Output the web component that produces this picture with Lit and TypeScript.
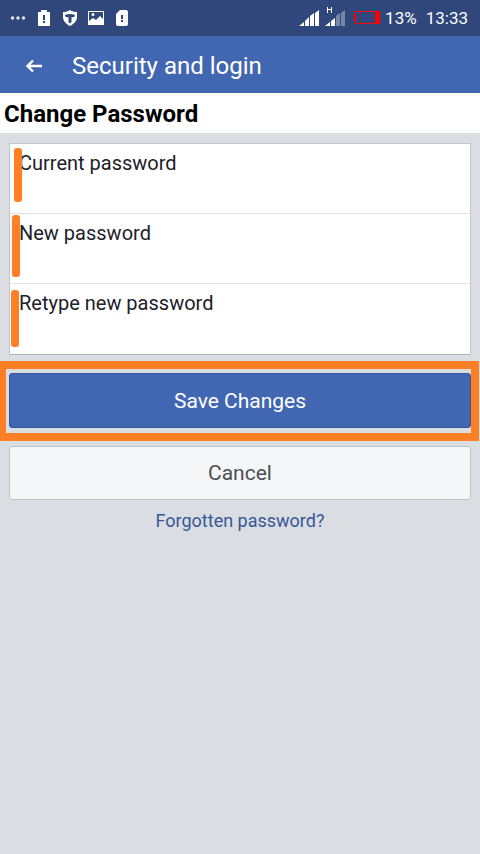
import { LitElement, html, css } from "lit";
import { customElement } from "lit/decorators.js";

@customElement("status-bar")
class StatusBar extends LitElement {
  static styles = css`
    :host {
      display: flex;
      align-items: center;
      justify-content: space-between;
      height: 36px;
      padding: 0 12px 0 10px;
      background: #2f477a;
      color: #fff;
      font-size: 17px;
      line-height: 20px;
    }
    .group { display: flex; align-items: center; }
    .notices { gap: 10px; }
    .signal { margin-right: 4px; }
    .battery { margin: 0 5px 0 4px; }
    .time { margin-left: 9px; }
    svg { display: block; }
  `;

  render() {
    return html`
      <div class="group notices">
        <svg width="16" height="20" fill="#e3e8f0" aria-hidden="true">
          <circle cx="2.5" cy="10" r="1.7" /><circle cx="8" cy="10" r="1.7" /><circle cx="13.5" cy="10" r="1.7" />
        </svg>
        <svg width="16" height="20" aria-hidden="true">
          <path fill="#fff" d="M5 2h6v2h3v14H2V4h3z" />
          <path fill="#2f477a" d="M7 7h2v5H7zM7 13h2v2H7z" />
        </svg>
        <svg width="16" height="20" aria-hidden="true">
          <path fill="#fff" d="M8 2c2 1.500 4.500 2 7 2v5c0 4-3 7-7 9c-4-2-7-5-7-9V4c2.500 0 5-.500 7-2z" />
          <path fill="#2f477a" d="M3 7c3-1.300 7-1.300 10 0c0 2-1.500 2.500-3.500 2v5L8 15.500L6.500 14V9C4.500 9.500 3 9 3 7z" />
        </svg>
        <svg width="16" height="20" aria-hidden="true">
          <path fill="#fff" fill-rule="evenodd" d="M0 3h16v14H0zM1 4v9l4-3 3 2 4-4 3 3V4z" />
          <circle cx="5" cy="6.500" r="1.500" fill="#fff" />
        </svg>
        <svg width="16" height="20" aria-hidden="true">
          <path fill="#fff" d="M6 2h6q2 0 2 2v12q0 2-2 2H4q-2 0-2-2V6z" />
          <path fill="#2f477a" d="M7 7h2v4H7zM7 12h2v2H7z" />
        </svg>
      </div>
      <div class="group">
        <svg class="signal" width="22" height="36" fill="#fff" aria-hidden="true">
          <path d="M1 26l5-4v4zM7 21l4-4v9H7zM12 16l4-3v13h-4zM17 13l4-3v16h-4z" />
        </svg>
        <svg class="signal" width="22" height="36" fill="#fff" role="img" aria-label="H network">
          <path d="M1 26l5-4v4zM7 21l4-3v8H7z" />
          <path opacity=".35" d="M12 16l4-3v13h-4zM17 13l4-3v16h-4z" />
          <path d="M3 7h1v2h3V7h1v6H7v-3H4v3H3z" />
        </svg>
        <svg class="battery" width="26" height="36" aria-hidden="true">
          <path fill="#ff0000" fill-rule="evenodd" d="M1 11h25v13H1v-2L0 20v-5l1-2zM2 12v11h19V12z" />
        </svg>
        <span>13%</span>
        <span class="time">13:33</span>
      </div>
    `;
  }
}

@customElement("password-field")
class PasswordField extends LitElement {
  static properties = { label: { type: String } };
  declare label: string;

  static styles = css`
    :host { display: flex; flex-direction: column; padding: 7px 9px; }
    label { font-size: 20px; line-height: 24px; color: #1d2129; }
    input {
      flex: 1;
      min-height: 0;
      width: 100%;
      box-sizing: border-box;
      border: 0;
      padding: 0;
      background: transparent;
      font: inherit;
      font-size: 20px;
      outline: none;
    }
  `;

  render() {
    return html`
      <label for="value">${this.label}</label>
      <input id="value" type="password" />
    `;
  }
}

@customElement("app-root")
class AppRoot extends LitElement {
  static styles = css`
    :host {
      display: flex;
      flex-direction: column;
      min-height: 100vh;
      background: #dadde1;
      font-family: Roboto, "Liberation Sans", sans-serif;
    }
    header {
      display: flex;
      align-items: center;
      gap: 28px;
      box-sizing: border-box;
      height: 57px;
      padding: 2px 24px 0;
      background: #4267b2;
      color: #fff;
    }
    .back {
      display: flex;
      border: 0;
      padding: 0;
      background: none;
      color: inherit;
    }
    .title { font-size: 24px; line-height: 28px; }
    h1 {
      margin: 0;
      padding: 7px 4px 5px;
      background: #fff;
      color: #000;
      font-size: 24px;
      line-height: 28px;
      font-weight: 700;
    }
    main { display: flex; flex-direction: column; padding: 10px 9px; }
    .card {
      border: 1px solid #c2c6cb;
      border-bottom-color: #adb1b8;
      background: #fff;
    }
    .field {
      position: relative;
      display: grid;
      box-sizing: border-box;
      height: 70px;
      border-bottom: 1px solid #dddfe2;
    }
    .field:last-child { border-bottom: 0; }
    .mark {
      position: absolute;
      width: 8px;
      border-radius: 3px;
      background: #ff7f27;
    }
    .mark.current { left: 4px; top: 4px; height: 54px; }
    .mark.new { left: 2px; top: 1px; height: 62px; }
    .mark.retype { left: 1px; top: 6px; height: 57px; }
    .save { position: relative; margin: 18px 0; }
    .frame {
      position: absolute;
      inset: -12px -8px -13px -9px;
      border: 8px solid #ff7f27;
      border-left-width: 6px;
      pointer-events: none;
    }
    .button {
      display: block;
      width: 100%;
      height: 55px;
      box-sizing: border-box;
      border: 1px solid #365899;
      border-radius: 3px;
      background: #4267b2;
      color: #fff;
      font: inherit;
      font-size: 21px;
      line-height: 24px;
    }
    .button.plain {
      height: 54px;
      border-color: #bec3c9;
      background: #f5f6f7;
      color: #4b4f56;
    }
    a {
      align-self: center;
      margin-top: 9px;
      color: #385898;
      font-size: 18px;
      line-height: 24px;
      text-decoration: none;
    }
  `;

  render() {
    const fields = [
      ["Current password", "current"],
      ["New password", "new"],
      ["Retype new password", "retype"],
    ];
    return html`
      <status-bar></status-bar>
      <header>
        <button class="back" aria-label="Back">
          <svg width="20" height="20" fill="none" stroke="currentColor" stroke-width="2.400">
            <path d="M3 10h15M9 4.500L3.500 10L9 15.500" />
          </svg>
        </button>
        <span class="title">Security and login</span>
      </header>
      <h1>Change Password</h1>
      <main>
        <div class="card">
          ${fields.map(
            ([label, name]) => html`<div class="field">
              <password-field .label=${label}></password-field>
              <span class="mark ${name}"></span>
            </div>`
          )}
        </div>
        <div class="save">
          <button class="button">Save Changes</button>
          <span class="frame"></span>
        </div>
        <button class="button plain">Cancel</button>
        <a href="#">Forgotten password?</a>
      </main>
    `;
  }
}
